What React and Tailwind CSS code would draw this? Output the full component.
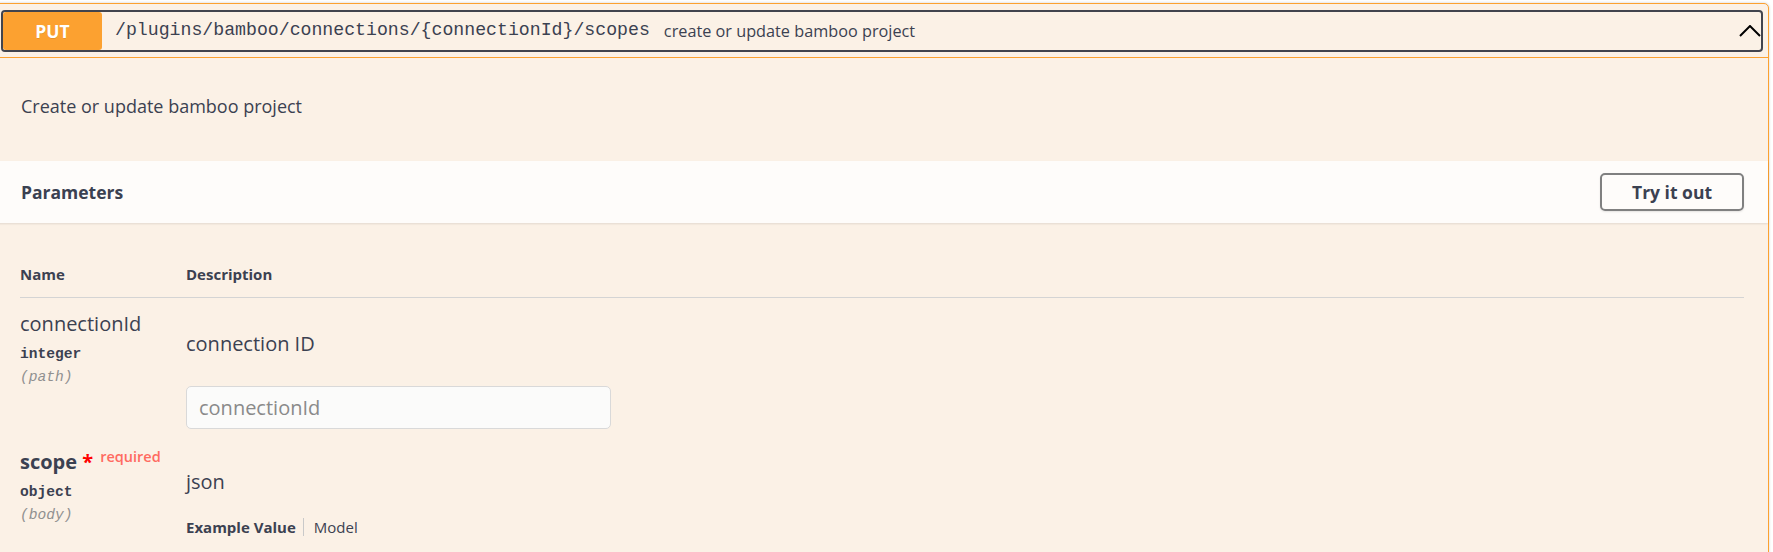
import React from 'react';

const sans = { fontFamily: '"Open Sans", "Noto Sans", sans-serif' };
const mono = { fontFamily: '"Liberation Mono", "DejaVu Sans Mono", monospace' };

const Chevron = () => (
  <svg width="22" height="12" viewBox="0 0 22 12" className="shrink-0">
    <polyline points="1,11 11,1 21,11" fill="none" stroke="#000" strokeWidth="2" />
  </svg>
);

const ParamName = ({ name, type, where, required }) => (
  <div className="w-[166px] shrink-0">
    <div className="text-[20px] leading-[24px] whitespace-nowrap">
      <span className={required ? 'font-bold' : ''}>{name}</span>
      {required && (
        <>
          <span className="text-[#ff0000] font-bold">&nbsp;*</span>
          <span className="relative top-[-7.5px] pl-[7px] text-[14.5px] leading-none font-semibold text-[#ff6b61]">required</span>
        </>
      )}
    </div>
    <div style={mono} className="mt-[9px] text-[14.6px] leading-[18px] font-bold text-[#3b4151]">
      {type}
    </div>
    <div style={mono} className="mt-[5px] text-[14.6px] leading-[18px] italic text-[#909090]">
      ({where})
    </div>
  </div>
);

const App = () => {
  return (
    <div style={sans} className="min-h-screen bg-white pt-[3px] text-[#3b4151] overflow-hidden">
      <div className="ml-[-5px] w-[1774px] rounded-[5px] border border-[#fca130] bg-[#fbf1e6] shadow-[0_0_3px_rgba(0,0,0,0.19)]">
        {/* Summary */}
        <div className="border-b border-[#fca130] px-[5px] pt-[6px] pb-[5px]">
          <div className="flex h-[42px] items-center rounded-[4px] border-2 border-[#41444e]">
            <span className="flex h-[38px] w-[99px] shrink-0 items-center justify-center rounded-[3px] bg-[#fca130] text-[17.5px] font-bold text-white [text-shadow:0_1px_0_rgba(0,0,0,0.1)]">
              PUT
            </span>
            <span style={mono} className="pl-[13px] pr-[14px] text-[18.2px] text-[#3b4151] whitespace-nowrap">
              /plugins/bamboo/connections/{'{'}connectionId{'}'}/scopes
            </span>
            <span className="text-[16.25px] whitespace-nowrap">create or update bamboo project</span>
            <span className="ml-auto flex items-center">
              <Chevron />
            </span>
          </div>
        </div>

        {/* Description */}
        <div className="px-[25px] pt-[37px] pb-[44px]">
          <p className="text-[18px] leading-[22px]">Create or update bamboo project</p>
        </div>

        {/* Parameters header */}
        <div className="flex h-[62px] items-center justify-between bg-white/80 pl-[25px] pr-[24px] shadow-[0_1px_2px_rgba(0,0,0,0.1)]">
          <h4 className="text-[17.5px] font-bold">Parameters</h4>
          <button className="h-[38px] w-[144px] rounded-[5px] border-2 border-[#808080] bg-transparent text-[17.5px] font-bold text-[#3b4151] shadow-[0_1px_2px_rgba(0,0,0,0.1)]">
            Try it out
          </button>
        </div>

        {/* Table */}
        <div className="pl-[24px] pr-[24px] pt-[25px] pb-[40px]">
          <div className="flex border-b border-[#d4d4d4] pt-[17px] pb-[14px] text-[15px] leading-[18px] font-bold">
            <div className="w-[166px] shrink-0">Name</div>
            <div>Description</div>
          </div>

          {/* connectionId */}
          <div className="flex items-start pt-[14px]">
            <ParamName name="connectionId" type="integer" where="path" />
            <div className="pt-[20px]">
              <p className="text-[20px] leading-[24px]">connection ID</p>
              <input
                placeholder="connectionId"
                style={sans}
                className="mt-[30px] h-[43px] w-[425px] rounded-[5px] border border-[#d9d9d9] bg-[#fbfbfa] px-[12px] text-[20px] text-[#3b4151] placeholder:text-[#8a8a8a] outline-none"
              />
            </div>
          </div>

          {/* scope */}
          <div className="flex items-start pt-[21px]">
            <ParamName name="scope" type="object" where="body" required />
            <div className="pt-[20px]">
              <p className="text-[20px] leading-[24px]">json</p>
              <div className="mt-[24px] flex items-center text-[15px] leading-[18px]">
                <span className="border-r border-[#c9c9c9] pr-[7px] font-bold">Example Value</span>
                <span className="pl-[10px]">Model</span>
              </div>
            </div>
          </div>
        </div>
      </div>
    </div>
  );
};

export default App;
